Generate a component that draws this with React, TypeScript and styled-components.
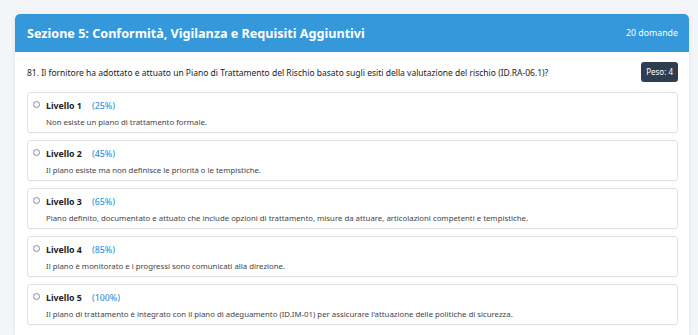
import React from "react";
import styled, { createGlobalStyle } from "styled-components";

const Global = createGlobalStyle`
  html, body { margin: 0; padding: 0; }
  body {
    background: #f4f5f9;
    font-family: "Noto Sans", "Open Sans", sans-serif;
    color: #222;
  }
`;

const Page = styled.div`
  padding: 14px 9px 0 15px;
`;

const Card = styled.section`
  background: #fff;
  border-radius: 5px 5px 0 0;
  box-shadow: 0 1px 4px rgba(0, 0, 0, 0.08);
  overflow: hidden;
`;

const Header = styled.header`
  background: #3498db;
  color: #fff;
  height: 38px;
  padding: 0 11px 0 12px;
  display: flex;
  align-items: center;
  justify-content: space-between;
`;

const Title = styled.h2`
  margin: 0;
  font-size: 12.6px;
  font-weight: 700;
`;

const Count = styled.span`
  font-size: 8.8px;
`;

const Body = styled.div`
  padding: 9px 11px 10px 12px;
`;

const QuestionRow = styled.div`
  display: flex;
  align-items: center;
  justify-content: space-between;
  margin-bottom: 9px;
  height: 22px;
`;

const Question = styled.p`
  margin: 0;
  font-size: 8.5px;
  color: #222;
`;

const Badge = styled.span`
  background: #2c3e50;
  color: #fff;
  font-size: 8px;
  padding: 0 5px;
  height: 20px;
  line-height: 20px;
  border-radius: 3px;
`;

const Options = styled.div`
  display: flex;
  flex-direction: column;
  gap: 7px;
`;

const Option = styled.label`
  display: flex;
  gap: 6px;
  align-items: flex-start;
  border: 1px solid #e3e3e3;
  border-radius: 3px;
  padding: 6px 8px 5px 5px;
  height: 41px;
  box-sizing: border-box;
  box-shadow: 0 1px 1px rgba(0, 0, 0, 0.03);
`;

const Radio = styled.input`
  appearance: none;
  margin: 2px 0 0 0;
  width: 7px;
  height: 7px;
  border: 1px solid #8a8a8a;
  border-radius: 50%;
  background: #fff;
  flex: none;
`;

const Content = styled.div`
  display: flex;
  flex-direction: column;
`;

const LevelLine = styled.div`
  display: flex;
  gap: 10px;
  font-size: 8.8px;
  line-height: 14px;
`;

const Level = styled.span`
  font-weight: 700;
  color: #222;
`;

const Pct = styled.span`
  color: #3498db;
  font-weight: 500;
`;

const Desc = styled.div`
  font-size: 7.8px;
  line-height: 12px;
  margin-top: 3px;
  color: #444;
`;

const levels = [
  { n: 1, p: "25%", d: "Non esiste un piano di trattamento formale." },
  { n: 2, p: "45%", d: "Il piano esiste ma non definisce le priorità o le tempistiche." },
  {
    n: 3,
    p: "65%",
    d: "Piano definito, documentato e attuato che include opzioni di trattamento, misure da attuare, articolazioni competenti e tempistiche.",
  },
  { n: 4, p: "85%", d: "Il piano è monitorato e i progressi sono comunicati alla direzione." },
  {
    n: 5,
    p: "100%",
    d: "Il piano di trattamento è integrato con il piano di adeguamento (ID.IM-01) per assicurare l'attuazione delle politiche di sicurezza.",
  },
];

export default function App() {
  return (
    <>
      <Global />
      <Page>
        <Card>
          <Header>
            <Title>Sezione 5: Conformità, Vigilanza e Requisiti Aggiuntivi</Title>
            <Count>20 domande</Count>
          </Header>
          <Body>
            <QuestionRow>
              <Question>
                81. Il fornitore ha adottato e attuato un Piano di Trattamento del Rischio basato sugli
                esiti della valutazione del rischio (ID.RA-06.1)?
              </Question>
              <Badge>Peso: 4</Badge>
            </QuestionRow>
            <Options>
              {levels.map((l) => (
                <Option key={l.n}>
                  <Radio type="radio" name="q81" />
                  <Content>
                    <LevelLine>
                      <Level>Livello {l.n}</Level>
                      <Pct>({l.p})</Pct>
                    </LevelLine>
                    <Desc>{l.d}</Desc>
                  </Content>
                </Option>
              ))}
            </Options>
          </Body>
        </Card>
      </Page>
    </>
  );
}
